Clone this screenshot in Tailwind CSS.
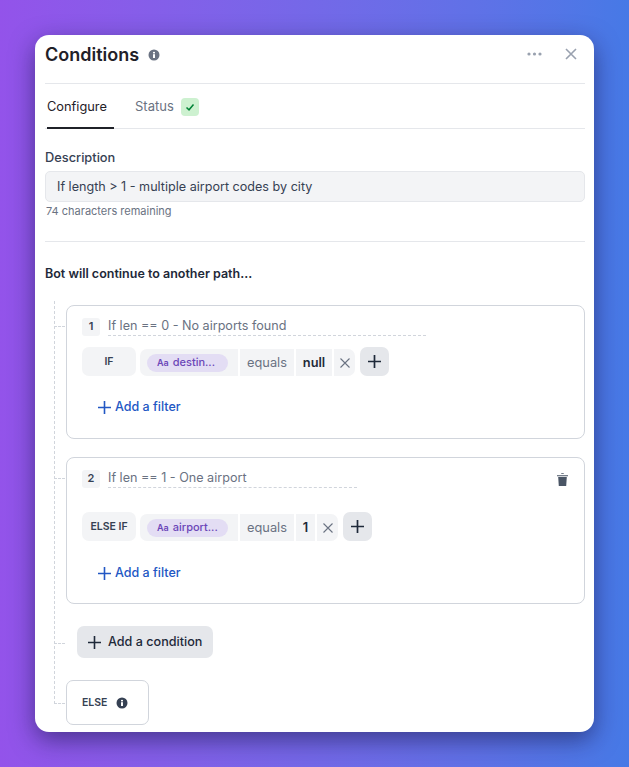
<!DOCTYPE html>
<html lang="en">
<head>
    <meta charset="UTF-8">
    <meta name="viewport" content="width=device-width, initial-scale=1.0">
    <script src="https://cdn.jsdelivr.net/npm/@tailwindcss/browser@4"></script>
    <title>Conditions</title>
</head>
<body class="h-[767px] w-[629px] overflow-hidden bg-gradient-to-r from-[#9353ea] to-[#4679e6] pl-[35px] pt-[35px] font-['Inter',sans-serif]">
    <div class="h-[697px] w-[559px] rounded-[14px] bg-white pl-[10px] pr-[9px] shadow-[0_8px_24px_rgba(20,20,70,0.55)]">
        <!-- header -->
        <div class="flex h-[49px] items-center justify-between border-b border-gray-200 pb-[10px]">
            <div class="flex items-center gap-[9px]">
                <h1 class="text-[18px] font-semibold text-[#1f2128]">Conditions</h1>
                <svg class="mt-[2px] h-[12px] w-[12px] text-gray-500" viewBox="0 0 12 12"><circle cx="6" cy="6" r="5.5" fill="currentColor"/><rect x="5" y="5.2" width="2" height="3.8" fill="#fff"/><rect x="5" y="2.9" width="2" height="1.5" fill="#fff"/></svg>
            </div>
            <div class="flex items-center gap-[23px] pr-[8px]">
                <svg class="h-[4px] w-[15px] text-gray-400" viewBox="0 0 15 4" fill="currentColor"><circle cx="2" cy="2" r="1.6"/><circle cx="7.5" cy="2" r="1.6"/><circle cx="13" cy="2" r="1.6"/></svg>
                <svg class="h-[12px] w-[12px] text-gray-400" viewBox="0 0 12 12" fill="none" stroke="currentColor" stroke-width="1.6"><path d="M1 1l10 10M11 1L1 11"/></svg>
            </div>
        </div>
        <!-- tabs -->
        <div class="flex h-[45px] items-start gap-[21px] border-b border-gray-200 pl-[2px]">
            <div class="h-[45px] w-[67px] border-b-2 border-[#1f2128] pt-[13px] text-[12.8px] text-[#1f2128]">Configure</div>
            <div class="flex items-center gap-[7px] pt-[13px] text-[13px] text-gray-500">
                <span>Status</span>
                <span class="flex h-[18px] w-[18px] items-center justify-center rounded-[4px] bg-[#cdf1d0]">
                    <svg class="h-[10px] w-[10px] text-green-700" viewBox="0 0 10 10" fill="none" stroke="currentColor" stroke-width="1.5"><path d="M1.5 5.5l2.5 2.3 4.5-5.3"/></svg>
                </span>
            </div>
        </div>
        <!-- description -->
        <label class="mt-[21px] block text-[12.8px] leading-[16px] font-medium text-gray-700">Description</label>
        <div class="mt-[5px] flex h-[31px] items-center rounded-[5px] border border-gray-200 bg-gray-100 pl-[11px] pt-[1px] text-[12.6px] text-gray-700">If length &gt; 1 - multiple airport codes by city</div>
        <p class="mt-[2px] pl-[1px] text-[11px] leading-[14px] text-gray-500">74 characters remaining</p>
        <div class="mt-[23px] border-t border-gray-200"></div>
        <p class="mt-[24px] text-[12.5px] leading-[16px] font-semibold text-gray-800">Bot will continue to another path...</p>

        <!-- paths -->
        <div class="relative mt-[23px] pl-[21px]">
            <div class="absolute top-[-4px] left-[9px] h-[403px] w-0 border-l border-dashed border-gray-300"></div>
            <div class="absolute top-[21px] left-[9px] w-[11px] border-t border-dashed border-gray-300"></div>
            <div class="absolute top-[173px] left-[9px] w-[11px] border-t border-dashed border-gray-300"></div>
            <div class="absolute top-[338px] left-[9px] w-[11px] border-t border-dashed border-gray-300"></div>
            <div class="absolute top-[398px] left-[9px] w-[11px] border-t border-dashed border-gray-300"></div>

            <!-- condition 1 -->
            <div class="h-[134px] rounded-[8px] border border-gray-300 px-[15px] pt-[11px]">
                <div class="flex items-center gap-[8px]">
                    <span class="flex h-[18px] w-[18px] items-center justify-center rounded-[3px] bg-gray-100 text-[11px] font-semibold text-gray-700">1</span>
                    <span class="h-[19px] w-[318px] border-b border-dashed border-gray-300 text-[12.6px] leading-[18px] text-gray-500">If len == 0 - No airports found</span>
                </div>
                <div class="mt-[11px] flex items-end">
                    <div class="flex h-[29px] w-[54px] items-center justify-center rounded-[7px] bg-gray-100 text-[10.5px] font-semibold text-gray-700">IF</div>
                    <div class="ml-[4px] flex h-[27px] w-[98px] items-center rounded-l-[7px] bg-gray-100 pl-[7px]">
                        <span class="flex h-[18px] w-[81px] items-center gap-[4px] rounded-full bg-[#e3ddf4] pl-[10px] text-[11px] font-medium text-[#6b46b8]"><span class="text-[9px] font-semibold">Aa</span>destin...</span>
                    </div>
                    <div class="ml-[2px] flex h-[27px] w-[54px] items-center justify-center bg-gray-100 text-[12.8px] text-gray-500">equals</div>
                    <div class="ml-[2px] flex h-[27px] w-[36px] items-center justify-center bg-gray-100 text-[12.8px] font-semibold text-gray-800">null</div>
                    <div class="ml-[2px] flex h-[27px] w-[21px] items-center justify-center rounded-r-[7px] bg-gray-100">
                        <svg class="h-[10px] w-[10px] text-gray-500" viewBox="0 0 10 10" fill="none" stroke="currentColor" stroke-width="1.1"><path d="M.5.5l9 9M9.5.5l-9 9"/></svg>
                    </div>
                    <div class="ml-[5px] flex h-[29px] w-[29px] items-center justify-center rounded-[7px] bg-gray-200">
                        <svg class="h-[13px] w-[13px] text-gray-800" viewBox="0 0 13 13" fill="none" stroke="currentColor" stroke-width="1.7"><path d="M6.5 0v13M0 6.5h13"/></svg>
                    </div>
                </div>
                <div class="mt-[22px] flex items-center gap-[4px] pl-[16px] text-[12.5px] font-medium text-[#2257c4]">
                    <svg class="mt-[1px] h-[13px] w-[13px]" viewBox="0 0 13 13" fill="none" stroke="currentColor" stroke-width="1.6"><path d="M6.5 0v13M0 6.5h13"/></svg>
                    Add a filter
                </div>
            </div>

            <!-- condition 2 -->
            <div class="relative mt-[18px] h-[147px] rounded-[8px] border border-gray-300 px-[15px] pt-[11px]">
                <svg class="absolute top-[15px] right-[16px] h-[13px] w-[11px] text-gray-600" viewBox="0 0 11 13" fill="currentColor"><path d="M0 2.2h11v1.1H0zM4 1.1L4.5.3h2l.5.8zM1.2 4h8.6l-.6 9H1.8z"/></svg>
                <div class="flex items-center gap-[8px]">
                    <span class="flex h-[18px] w-[18px] items-center justify-center rounded-[3px] bg-gray-100 text-[11px] font-semibold text-gray-700">2</span>
                    <span class="h-[19px] w-[249px] border-b border-dashed border-gray-300 text-[12.6px] leading-[18px] text-gray-500">If len == 1 - One airport</span>
                </div>
                <div class="mt-[24px] flex items-end">
                    <div class="flex h-[29px] w-[54px] items-center justify-center rounded-[7px] bg-gray-100 text-[10.5px] font-semibold text-gray-700">ELSE IF</div>
                    <div class="ml-[4px] flex h-[27px] w-[98px] items-center rounded-l-[7px] bg-gray-100 pl-[7px]">
                        <span class="flex h-[18px] w-[81px] items-center gap-[4px] rounded-full bg-[#e3ddf4] pl-[10px] text-[11px] font-medium text-[#6b46b8]"><span class="text-[9px] font-semibold">Aa</span>airport...</span>
                    </div>
                    <div class="ml-[2px] flex h-[27px] w-[54px] items-center justify-center bg-gray-100 text-[12.8px] text-gray-500">equals</div>
                    <div class="ml-[2px] flex h-[27px] w-[19px] items-center justify-center bg-gray-100 text-[12.8px] font-semibold text-gray-800">1</div>
                    <div class="ml-[2px] flex h-[27px] w-[21px] items-center justify-center rounded-r-[7px] bg-gray-100">
                        <svg class="h-[10px] w-[10px] text-gray-500" viewBox="0 0 10 10" fill="none" stroke="currentColor" stroke-width="1.1"><path d="M.5.5l9 9M9.5.5l-9 9"/></svg>
                    </div>
                    <div class="ml-[5px] flex h-[29px] w-[29px] items-center justify-center rounded-[7px] bg-gray-200">
                        <svg class="h-[13px] w-[13px] text-gray-800" viewBox="0 0 13 13" fill="none" stroke="currentColor" stroke-width="1.7"><path d="M6.5 0v13M0 6.5h13"/></svg>
                    </div>
                </div>
                <div class="mt-[23px] flex items-center gap-[4px] pl-[16px] text-[12.5px] font-medium text-[#2257c4]">
                    <svg class="mt-[1px] h-[13px] w-[13px]" viewBox="0 0 13 13" fill="none" stroke="currentColor" stroke-width="1.6"><path d="M6.5 0v13M0 6.5h13"/></svg>
                    Add a filter
                </div>
            </div>

            <!-- add condition -->
            <div class="mt-[22px] ml-[11px] flex h-[32px] w-[136px] items-center gap-[7px] rounded-[7px] bg-gray-200 pl-[11px] text-[12.6px] font-medium text-gray-800">
                <svg class="h-[13px] w-[13px]" viewBox="0 0 13 13" fill="none" stroke="currentColor" stroke-width="1.6"><path d="M6.5 0v13M0 6.5h13"/></svg>
                Add a condition
            </div>

            <!-- else -->
            <div class="mt-[22px] flex h-[45px] w-[83px] items-center gap-[9px] rounded-[7px] border border-gray-300 pl-[15px] text-[10.5px] font-semibold text-gray-700">
                ELSE
                <svg class="h-[12px] w-[12px] text-gray-700" viewBox="0 0 12 12"><circle cx="6" cy="6" r="5.5" fill="currentColor"/><rect x="5" y="5.2" width="2" height="3.8" fill="#fff"/><rect x="5" y="2.9" width="2" height="1.5" fill="#fff"/></svg>
            </div>
        </div>
    </div>
</body>
</html>
